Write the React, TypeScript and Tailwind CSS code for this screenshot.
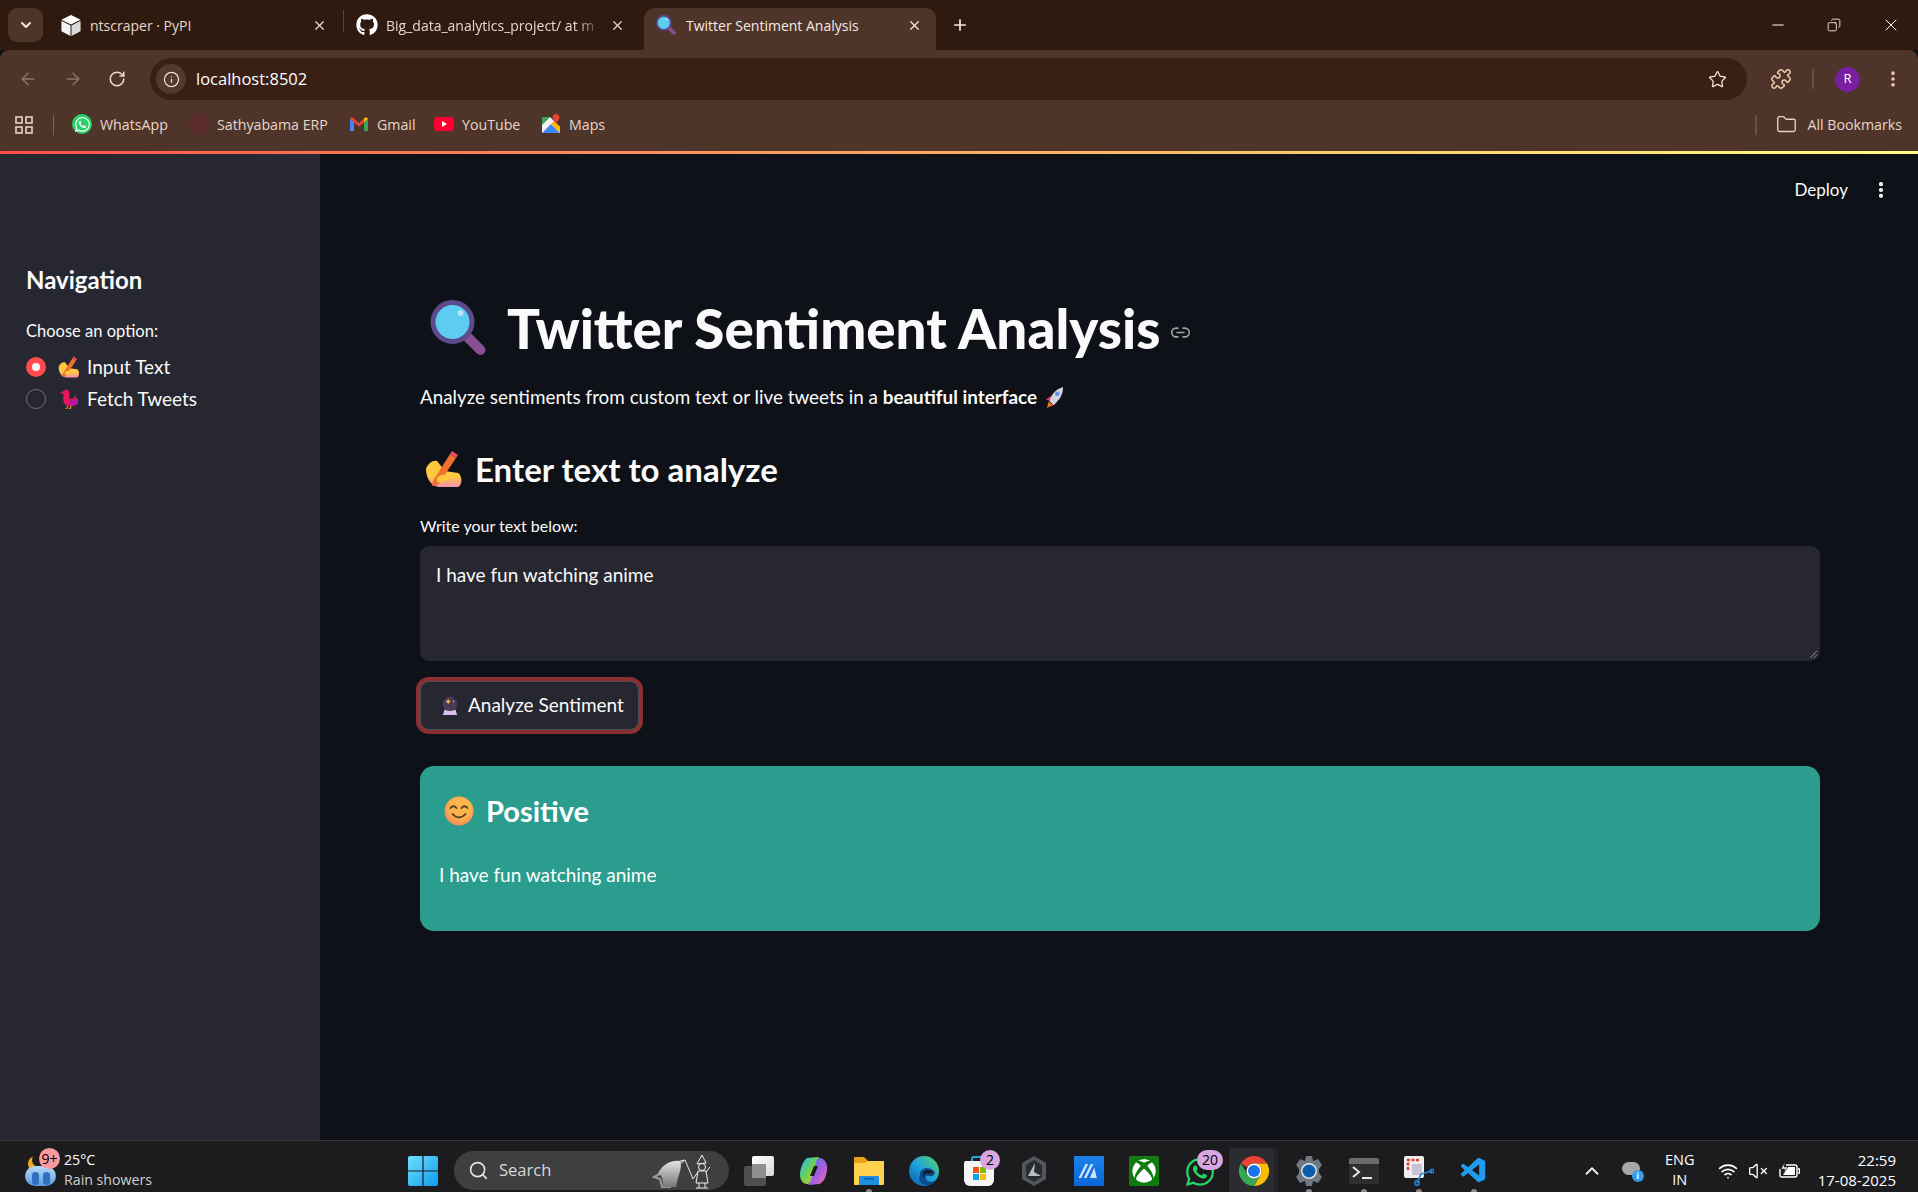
import {
  ArrowLeft,
  ArrowRight,
  ChevronDown,
  ChevronUp,
  Copy,
  EllipsisVertical,
  Folder,
  Info,
  Link2,
  Minus,
  Plus,
  Puzzle,
  RotateCw,
  Search,
  Star,
  VolumeX,
  Wifi,
  X,
} from 'lucide-react';
import { FaGithub, FaWhatsapp, FaXbox } from 'react-icons/fa';
import { VscVscode } from 'react-icons/vsc';

const BODY = "font-['Lato','Noto_Sans',sans-serif]";
const CHROME = "font-['Open_Sans','Noto_Sans',sans-serif]";

function Magnifier({ className }: { className?: string }) {
  return (
    <svg viewBox="0 0 56 56" className={className}>
      <path d="M33 33 L50 50" stroke="#8a4f93" strokeWidth="10" strokeLinecap="round" />
      <circle cx="22" cy="22" r="19.5" fill="#5ccdf0" stroke="#5c4a8c" strokeWidth="5" />
      <circle cx="30" cy="13" r="3" fill="#b9e6f7" />
    </svg>
  );
}

function WritingHand({ className }: { className?: string }) {
  return (
    <svg viewBox="0 0 38 38" className={className}>
      <defs>
        <linearGradient id="handFill" x1="0" y1="0" x2="0" y2="1">
          <stop offset="0.6" stopColor="#ffc83d" />
          <stop offset="1" stopColor="#f790b0" />
        </linearGradient>
      </defs>
      <path d="M1 19 C3 13 8 10 12 11 L20 21 L33 23 C37 25 38 35 33 37 L15 37 C7 37 1 29 1 19 Z" fill="url(#handFill)" />
      <path d="M8 31 L25 4 L31 8 L13 35 L7 36 Z" fill="#f0702f" />
      <path d="M25 4 L27 1 L33 5 L31 8 Z" fill="#ef4a5f" />
      <path d="M12 28 C16 24 21 24 25 27 C22 31 17 33 12 32 Z" fill="#ffc83d" />
    </svg>
  );
}

function Rooster({ className }: { className?: string }) {
  return (
    <svg viewBox="0 0 22 24" className={className}>
      <path d="M0 4 L4 3 C6 0 10 0 11 3 C12 6 11 9 12 12 L17 11 L19 7 L20 12 L22 11 L21 18 C18 21 10 22 6 18 C3 14 5 9 4 6 Z" fill="#e8175d" />
      <path d="M11 14 L21 12 L21 18 C18 20 13 20 10 18 Z" fill="#b5179e" />
      <path d="M9 20 L9 23 L7 23.5 M13 20 L13 23 L11 23.5" fill="none" stroke="#f0902f" strokeWidth="1.4" />
    </svg>
  );
}

function Rocket({ className }: { className?: string }) {
  return (
    <svg viewBox="0 0 22 24" className={className}>
      <path d="M3 23 L5 16 L9 20 Z" fill="#f97316" />
      <path d="M2 14 L8 10 L7 16 Z M8 22 L13 15 L9 16 Z" fill="#e8396b" />
      <path d="M6 16 C7 9 13 3 20 1 C20 9 16 15 10 20 Z" fill="#d5d3de" />
      <circle cx="14" cy="8" r="2.4" fill="#6a8fe8" />
    </svg>
  );
}

function CrystalBall({ className }: { className?: string }) {
  return (
    <svg viewBox="0 0 20 22" className={className}>
      <circle cx="10" cy="8.5" r="8" fill="#4a3a55" />
      <path d="M7 5 L8 3 L9 5 L11 6 L9 7 L8 9 L7 7 L5 6 Z M13 6 L14 5 L15 6 L14 7 Z" fill="#f5b642" />
      <path d="M4 15 C7 17 13 17 16 15 L18 21 L2 21 Z" fill="#d9bfee" />
    </svg>
  );
}

function Smile({ className }: { className?: string }) {
  return (
    <svg viewBox="0 0 30 30" className={className}>
      <defs>
        <radialGradient id="smileFill" cx="0.55" cy="0.4" r="0.7">
          <stop offset="0.5" stopColor="#fdb44b" />
          <stop offset="1" stopColor="#f2795a" />
        </radialGradient>
      </defs>
      <circle cx="15" cy="15" r="14.5" fill="url(#smileFill)" />
      <path d="M6.5 12 Q9.5 8.5 12.5 12 M17.5 12 Q20.5 8.5 23.5 12" fill="none" stroke="#5b3a29" strokeWidth="1.8" strokeLinecap="round" />
      <path d="M8.5 18 Q15 25 21.5 18" fill="none" stroke="#5b3a29" strokeWidth="1.8" strokeLinecap="round" />
    </svg>
  );
}

function PypiBox() {
  return (
    <svg viewBox="0 0 22 24" className="h-[23px] w-[22px]">
      <path d="M11 1 L21 6 L11 11 L1 6 Z" fill="#ffffff" />
      <path d="M1 7 L10.5 12 L10.5 23 L1 18 Z" fill="#f2f2f2" />
      <path d="M21 7 L11.5 12 L11.5 23 L21 18 Z" fill="#d9d9d9" />
    </svg>
  );
}

function AppsGrid() {
  return (
    <svg viewBox="0 0 18 18" className="h-[18px] w-[18px]" fill="none" stroke="#e6d3c7" strokeWidth="1.6">
      <rect x="1" y="1" width="6" height="6" />
      <rect x="11" y="1" width="6" height="6" />
      <rect x="1" y="11" width="6" height="6" />
      <rect x="11" y="11" width="6" height="6" />
    </svg>
  );
}

function GmailIcon() {
  return (
    <svg viewBox="0 0 18 14" className="h-[14px] w-[18px]">
      <path d="M0 2 L0 14 L4 14 L4 5 Z" fill="#4285f4" />
      <path d="M18 2 L18 14 L14 14 L14 5 Z" fill="#34a853" />
      <path d="M0 2 L2 0 L9 6 L16 0 L18 2 L9 9.5 Z" fill="#ea4335" />
      <path d="M14 5 L18 2 L16 0 L14 1.6 Z" fill="#fbbc04" />
    </svg>
  );
}

function YoutubeIcon() {
  return (
    <div className="flex h-[14px] w-5 items-center justify-center rounded-[4px] bg-[#ff0033]">
      <div className="h-0 w-0 border-y-[3px] border-l-[5px] border-y-transparent border-l-white" />
    </div>
  );
}

function MapsIcon() {
  return (
    <svg viewBox="0 0 18 20" className="h-5 w-[18px]">
      <path d="M0 3 L8 3 L0 11 Z" fill="#34a853" />
      <path d="M0 11 L8 3 L18 13 L18 19 L0 19 Z" fill="#f5f5f5" />
      <path d="M0 19 L9 10 L18 19 Z" fill="#4285f4" />
      <path d="M18 13 L18 19 L9 10 L12 7 Z" fill="#fbbc04" />
      <path d="M14 0 C17 0 18 3 17 5 L14 10 L11 5 C10 3 11 0 14 0 Z" fill="#ea4335" />
    </svg>
  );
}

function Tab({ icon, title, active, width, fade, right = 14 }: { icon: React.ReactNode; title: string; active?: boolean; width: number; fade?: boolean; right?: number }) {
  return (
    <div
      style={{ width, paddingRight: right }}
      className={`flex h-[42px] shrink-0 items-center pb-[8px] pl-[12px] ${active ? 'rounded-t-[11px] bg-[#4f3529] text-[#f5e9e1]' : 'text-[#e8d6ca]'}`}
    >
      <div className="flex w-[30px] shrink-0 items-center">{icon}</div>
      <div className={`min-w-0 flex-1 whitespace-nowrap text-[14px] ${fade ? '[mask-image:linear-gradient(90deg,black_88%,transparent)]' : ''}`}>{title}</div>
      <X size={15} strokeWidth={2} className="ml-2 shrink-0" />
    </div>
  );
}

function TabStrip() {
  return (
    <div className={`flex h-[50px] items-end bg-[#2f1a0f] ${CHROME}`}>
      <div className="mb-[8px] ml-[8px] flex h-[34px] w-[35px] items-center justify-center rounded-[9px] bg-[#4f3529]">
        <ChevronDown size={16} strokeWidth={3} className="text-[#f5e9e1]" />
      </div>
      <div className="ml-[5px] flex items-end">
        <Tab width={295} right={16} icon={<PypiBox />} title="ntscraper · PyPI" />
        <div className="mb-[18px] h-[22px] w-px bg-[#5c4436]" />
        <Tab width={300} right={19} icon={<FaGithub size={22} className="text-white" />} title="Big_data_analytics_project/ at m" fade />
        <Tab active width={292} icon={<Magnifier className="h-[20px] w-[20px]" />} title="Twitter Sentiment Analysis" />
      </div>
      <Plus size={18} strokeWidth={2.2} className="mb-[16px] ml-[15px] text-[#f5e9e1]" />
      <div className="flex-1" />
      <div className="mb-[15px] flex items-center gap-[40px] pr-[17px] text-white">
        <Minus size={18} strokeWidth={1.3} />
        <Copy size={14} strokeWidth={1.4} className="-scale-x-100" />
        <X size={20} strokeWidth={1.2} />
      </div>
    </div>
  );
}

function Toolbar() {
  return (
    <div className={`flex h-[50px] items-center rounded-t-[9px] bg-[#4f3529] pt-[8px] ${CHROME}`}>
      <div className="flex w-[150px] items-center gap-[25px] pl-[18px]">
        <ArrowLeft size={20} strokeWidth={1.6} className="text-[#8d7669]" />
        <ArrowRight size={20} strokeWidth={1.6} className="text-[#8d7669]" />
        <RotateCw size={18} strokeWidth={2} className="text-[#efddd2]" />
      </div>
      <div className="flex h-[42px] w-[1597px] items-center rounded-full bg-[#3a2014] pl-[6px] pr-[20px]">
        <div className="flex h-[30px] w-[30px] items-center justify-center rounded-full bg-[#533a2d]">
          <Info size={17} strokeWidth={1.8} className="text-[#efddd2]" />
        </div>
        <div className="ml-[10px] flex-1 text-[16.5px] text-white">localhost:8502</div>
        <Star size={19} strokeWidth={1.7} className="text-[#efddd2]" />
      </div>
      <Puzzle size={22} strokeWidth={1.7} className="ml-[23px] text-[#efc9b0]" />
      <div className="ml-[20px] h-[20px] w-[2px] bg-[#6b5042]" />
      <div className="ml-[21px] flex h-[25px] w-[25px] items-center justify-center rounded-full bg-[#7b1fa2] text-[13px] text-white">R</div>
      <EllipsisVertical size={20} strokeWidth={2.4} className="ml-[23px] text-[#efc9b0]" />
    </div>
  );
}

function Bookmark({ icon, label, w }: { icon: React.ReactNode; label: string; w: string }) {
  return (
    <div className={`flex items-center gap-[8px] ${w}`}>
      <div className="flex w-[20px] shrink-0 justify-center">{icon}</div>
      <span className="whitespace-nowrap text-[14.2px] text-[#e8d6ca]">{label}</span>
    </div>
  );
}

function BookmarksBar() {
  return (
    <div className={`flex h-[51px] items-center bg-[#4f3529] pb-[2px] ${CHROME}`}>
      <div className="ml-[15px]">
        <AppsGrid />
      </div>
      <div className="ml-[20px] h-[20px] w-px bg-[#7a6254]" />
      <div className="ml-[18px] flex items-center">
        <Bookmark w="w-[117px]" icon={<div className="flex h-5 w-5 items-center justify-center rounded-full bg-[#25d366]"><FaWhatsapp size={17} className="text-white" /></div>} label="WhatsApp" />
        <Bookmark w="w-[160px]" icon={<div className="h-5 w-5 rounded-full bg-[#5a2a2d]" />} label="Sathyabama ERP" />
        <Bookmark w="w-[85px]" icon={<GmailIcon />} label="Gmail" />
        <Bookmark w="w-[107px]" icon={<YoutubeIcon />} label="YouTube" />
        <Bookmark w="w-[69px]" icon={<MapsIcon />} label="Maps" />
      </div>
      <div className="flex-1" />
      <div className="h-[20px] w-[2px] bg-[#6b5042]" />
      <Folder size={21} strokeWidth={1.5} className="ml-[19px] text-[#e6d3c7]" />
      <span className="ml-[10px] mr-[16px] whitespace-nowrap text-[14.2px] text-[#e8d6ca]">All Bookmarks</span>
    </div>
  );
}

function Sidebar() {
  return (
    <div className={`w-[320px] shrink-0 bg-[#262730] pl-[26px] pt-[109px] text-[#fafafa] ${BODY}`}>
      <div className="text-[24px] font-bold leading-[34px]">Navigation</div>
      <div className="mt-[23px] text-[16.5px] leading-[22px]">Choose an option:</div>
      <div className="mt-[9px] flex h-[32px] items-center">
        <div className="flex h-5 w-5 items-center justify-center rounded-full bg-[#ff4b4b]">
          <div className="h-2 w-2 rounded-full bg-[#f5f5f5]" />
        </div>
        <WritingHand className="ml-[12px] h-[22px] w-[22px]" />
        <span className="ml-[7px] text-[19px]">Input Text</span>
      </div>
      <div className="flex h-[32px] items-center">
        <div className="h-5 w-5 rounded-full border border-[#70717a]" />
        <Rooster className="ml-[13px] h-[20px] w-[20px]" />
        <span className="ml-[8px] text-[19px]">Fetch Tweets</span>
      </div>
    </div>
  );
}

function MainPane() {
  return (
    <div className={`flex-1 bg-[#0e1117] text-[#fafafa] ${BODY}`}>
      <div className="flex h-[71px] items-center justify-end pr-[27px]">
        <span className="text-[17px]">Deploy</span>
        <EllipsisVertical size={20} strokeWidth={3} className="ml-[23px] text-white" />
      </div>
      <div className="pl-[100px] pr-[98px]">
        <div className="mt-[73px] flex h-[60px] items-center">
          <Magnifier className="ml-[10px] h-[56px] w-[57px]" />
          <h1 className="ml-[20px] whitespace-nowrap text-[54.7px] font-black leading-[60px]">Twitter Sentiment Analysis</h1>
          <Link2 size={21} strokeWidth={1.8} className="ml-[10px] mt-[8px] text-[#a3a3a8]" />
        </div>
        <p className="mt-[27px] flex h-6 items-center whitespace-nowrap text-[18.85px] leading-6">
          <span className="whitespace-pre">Analyze sentiments from custom text or live tweets in a </span>
          <b className="font-bold">beautiful interface</b>
          <Rocket className="ml-[7px] h-[23px] w-[21px]" />
        </p>
        <div className="mt-[40px] flex h-10 items-center">
          <WritingHand className="ml-[5px] h-[38px] w-[38px]" />
          <h2 className="ml-[12px] whitespace-nowrap text-[33px] font-bold leading-10">Enter text to analyze</h2>
        </div>
        <div className="mt-[27px] text-[16px] leading-5">Write your text below:</div>
        <div className="relative mt-[10px] h-[115px] rounded-[9px] bg-[#262730] px-4 py-[17px] text-[19px] leading-6">
          I have fun watching anime
          <svg viewBox="0 0 10 10" className="absolute bottom-[2px] right-[2px] h-[9px] w-[9px]" stroke="#9a9aa0" strokeWidth="1">
            <path d="M1 9 L9 1 M5 9 L9 5" />
          </svg>
        </div>
        <div className="mt-[20px] flex h-[49px] w-[219px] items-center rounded-[9px] border border-[#4c4d57] bg-[#262730] pl-[20px] ring-4 ring-[#8b2f33]">
          <CrystalBall className="h-[20px] w-[18px]" />
          <span className="ml-[9px] whitespace-nowrap text-[19px]">Analyze Sentiment</span>
        </div>
        <div className="mt-[36px] h-[165px] rounded-[14px] bg-[#2a9d8f] pl-[19px] pt-[27px] text-white">
          <div className="flex h-9 items-center">
            <Smile className="ml-[5px] h-[30px] w-[30px]" />
            <span className="ml-[12px] text-[29px] font-bold leading-9">Positive</span>
          </div>
          <p className="mt-[34px] text-[19px] leading-6">I have fun watching anime</p>
        </div>
      </div>
    </div>
  );
}

function WindowsLogo() {
  return (
    <svg viewBox="0 0 30 30" className="h-[30px] w-[30px]">
      <defs>
        <linearGradient id="winFill" x1="0" y1="0" x2="1" y2="1">
          <stop offset="0" stopColor="#6fe0fb" />
          <stop offset="1" stopColor="#0f9bf0" />
        </linearGradient>
      </defs>
      <path d="M0 2 Q0 0 2 0 L14.4 0 L14.4 14.4 L0 14.4 Z M15.6 0 L28 0 Q30 0 30 2 L30 14.4 L15.6 14.4 Z M0 15.6 L14.4 15.6 L14.4 30 L2 30 Q0 30 0 28 Z M15.6 15.6 L30 15.6 L30 28 Q30 30 28 30 L15.6 30 Z" fill="url(#winFill)" />
    </svg>
  );
}

function ChromeLogo() {
  return (
    <svg viewBox="0 0 30 30" className="h-[30px] w-[30px]">
      <path d="M15 0 A15 15 0 0 1 28 7.5 L15 7.5 A7.5 7.5 0 0 0 8.5 11.2 L2 7.5 A15 15 0 0 1 15 0 Z" fill="#ea4335" />
      <path d="M28 7.5 A15 15 0 0 1 15 30 L21.5 18.8 A7.5 7.5 0 0 0 21.5 11.2 L15 7.5 Z" fill="#fbbc04" />
      <path d="M15 30 A15 15 0 0 1 2 7.5 L8.5 18.8 A7.5 7.5 0 0 0 21.5 18.8 Z" fill="#34a853" />
      <circle cx="15" cy="15" r="7.5" fill="#fff" />
      <circle cx="15" cy="15" r="6" fill="#1a73e8" />
    </svg>
  );
}

function Badge({ text, className }: { text: string; className: string }) {
  return (
    <div className={`absolute flex h-[20px] items-center justify-center rounded-full bg-[#d8a6e0] text-[14px] text-black ${className}`}>{text}</div>
  );
}

function RunDot() {
  return <div className="absolute -bottom-[7px] left-[12px] h-[4px] w-[6px] rounded-t-full bg-[#8a8a8a]" />;
}

// pinned apps, each in a 30px slot with a 25px gap
function PinnedApps() {
  return (
    <div className="flex items-center gap-[25px]">
      {/* task view */}
      <div className="relative h-[30px] w-[30px]">
        <div className="absolute bottom-0 left-0 h-[20px] w-[22px] rounded-[2px] bg-[#4f4f4f]" />
        <div className="absolute right-0 top-0 h-[20px] w-[22px] rounded-[2px] bg-gradient-to-br from-[#ffffff] to-[#d8d8d8]" />
        <div className="absolute left-[8px] top-[8px] h-[14px] w-[14px] bg-[#8f8f8f]" />
      </div>
      {/* copilot */}
      <svg viewBox="0 0 30 30" className="h-[30px] w-[30px]">
        <defs>
          <linearGradient id="copilotLeft" x1="0" y1="0" x2="1" y2="1">
            <stop offset="0" stopColor="#1fb6ff" />
            <stop offset="0.5" stopColor="#6bd34f" />
            <stop offset="1" stopColor="#ffc02e" />
          </linearGradient>
          <linearGradient id="copilotRight" x1="0" y1="0" x2="1" y2="1">
            <stop offset="0" stopColor="#3a7cf0" />
            <stop offset="0.6" stopColor="#b05be0" />
            <stop offset="1" stopColor="#f27a8a" />
          </linearGradient>
        </defs>
        <path d="M8 2 L19 1 C21 1 19 3 18 6 L13 24 C12 27 11 28 8 28 C4 28 1 24 1 19 C1 13 4 5 8 2 Z" fill="url(#copilotLeft)" />
        <path d="M21 2 C25 2 29 7 28 14 C27 22 24 27 20 28 L10 29 C8 29 11 27 12 24 L17 6 C18 3 19 2 21 2 Z" fill="url(#copilotRight)" />
        <path d="M15 10 L19 10 L15 20 L11 20 Z" fill="#1c1c1f" />
      </svg>
      {/* file explorer */}
      <div className="relative h-[30px] w-[30px]">
        <svg viewBox="0 0 30 30" className="h-[30px] w-[30px]">
          <path d="M0 2 Q0 1 1 1 L10 1 L14 5 L30 5 L30 12 L0 12 Z" fill="#e8a317" />
          <path d="M0 7 L11 7 L14 5 L30 5 L30 28 Q30 29 29 29 L1 29 Q0 29 0 28 Z" fill="#ffd24d" />
          <path d="M5 29 L5 21 Q5 20 6 20 L24 20 Q25 20 25 21 L25 29 Z" fill="#1d8fe0" />
          <rect x="10" y="22" width="10" height="1.5" fill="#0b5cab" />
        </svg>
        <RunDot />
      </div>
      {/* edge */}
      <svg viewBox="0 0 30 30" className="h-[30px] w-[30px]">
        <defs>
          <linearGradient id="edgeFill" x1="1" y1="0" x2="0" y2="1">
            <stop offset="0" stopColor="#5ed45a" />
            <stop offset="0.5" stopColor="#1ea4e0" />
            <stop offset="1" stopColor="#0c59a4" />
          </linearGradient>
        </defs>
        <circle cx="15" cy="15" r="15" fill="url(#edgeFill)" />
        <path d="M11 18 C11 12 19 10 24 14 C28 17 25 21 20 20 C17 19 16 20 17 23 C18 26 23 27 27 24 C23 30 15 31 11 26 C10 24 10 21 11 18 Z" fill="#0a4d8c" />
        <path d="M14 18 C14 14 20 13 23 15 C25 17 22 18 19 17.5 C16 17 14 19 15 22 C13 22 14 20 14 18 Z" fill="#1c1c1f" />
      </svg>
      {/* store */}
      <div className="relative h-[30px] w-[30px]">
        <div className="absolute left-[7px] top-0 h-[8px] w-[16px] rounded-t-[3px] border-x-2 border-t-2 border-[#29a5e8]" />
        <div className="absolute bottom-0 left-0 grid h-[25px] w-[30px] place-items-center rounded-b-[6px] rounded-t-[2px] bg-[#f5f5f5]">
          <div className="grid grid-cols-2 gap-px">
            <div className="h-[6px] w-[6px] bg-[#f25022]" />
            <div className="h-[6px] w-[6px] bg-[#7fba00]" />
            <div className="h-[6px] w-[6px] bg-[#00a4ef]" />
            <div className="h-[6px] w-[6px] bg-[#ffb900]" />
          </div>
        </div>
        <Badge text="2" className="-top-[6px] left-[16px] w-[20px]" />
      </div>
      {/* dark hexagon app */}
      <svg viewBox="0 0 30 30" className="h-[30px] w-[30px]">
        <path d="M15 0 L27 7 L27 23 L15 30 L3 23 L3 7 Z" fill="#53575c" />
        <path d="M15 4 L23 9 L23 21 L15 26 L7 21 L7 9 Z" fill="#2a2c30" />
        <path d="M16 7 L9 20 L22 20 L15 16 Z" fill="#b9bdc2" />
      </svg>
      {/* blue tile */}
      <div className="flex h-[30px] w-[30px] items-center justify-center bg-gradient-to-b from-[#1b82ea] to-[#0b66d8]">
        <svg viewBox="0 0 24 16" className="h-[14px] w-[22px]" fill="#cfe3fb">
          <path d="M0 16 L8 0 L11 0 L3 16 Z M6 16 L14 0 L17 0 L9 16 Z M18 4 L21 16 L13 16 Z" />
        </svg>
      </div>
      {/* xbox */}
      <div className="flex h-[30px] w-[30px] items-center justify-center rounded-[2px] bg-[#107c10]">
        <FaXbox size={24} className="text-white" />
      </div>
      {/* whatsapp */}
      <div className="relative h-[30px] w-[30px]">
        <FaWhatsapp size={32} className="text-[#25d366]" />
        <Badge text="20" className="-top-[6px] left-[13px] w-[26px]" />
      </div>
      {/* chrome, active */}
      <div className="relative -my-[8px] flex h-[46px] w-[30px] items-center justify-center">
        <div className="absolute -left-[10px] -right-[9px] top-0 h-[46px] rounded-[4px] bg-[#232326]" />
        <div className="absolute -left-[10px] -right-[5px] top-0 h-[46px] rounded-[4px] bg-[#2c2c30]" />
        <div className="relative">
          <ChromeLogo />
        </div>
        <div className="absolute -bottom-[3px] left-[5px] h-[3px] w-[20px] rounded-t-full bg-[#d8a6e0]" />
      </div>
      {/* settings */}
      <div className="relative h-[30px] w-[30px]">
        <svg viewBox="0 0 30 30" className="h-[30px] w-[30px]">
          <path d="M12 0 L18 0 L19 5 L24 3 L28 9 L25 13 L25 17 L28 21 L24 27 L19 25 L18 30 L12 30 L11 25 L6 27 L2 21 L5 17 L5 13 L2 9 L6 3 L11 5 Z" fill="#6f7780" />
          <circle cx="15" cy="15" r="8" fill="#dce2e8" />
          <circle cx="15" cy="15" r="6.5" fill="#0b5cab" />
        </svg>
        <RunDot />
      </div>
      {/* terminal */}
      <div className="relative h-[30px] w-[30px]">
        <div className="h-[26px] translate-y-[2px] rounded-[2px] bg-[#2e2e2e]">
          <div className="h-[6px] rounded-t-[2px] bg-[#6b6b6b]" />
          <svg viewBox="0 0 30 20" className="h-[20px] w-[30px]" fill="none" stroke="#e8e8e8" strokeWidth="2">
            <path d="M4 3 L10 8 L4 13" />
            <path d="M13 14 L23 14" />
          </svg>
        </div>
        <RunDot />
      </div>
      {/* snipping tool */}
      <div className="relative h-[30px] w-[30px]">
        <svg viewBox="0 0 30 30" className="h-[30px] w-[30px]">
          <rect x="0" y="0" width="20" height="22" rx="2" fill="#f0eeee" />
          <rect x="8" y="8" width="10" height="11" fill="#c9c3d8" />
          <path d="M4 14 L4 4 L15 4" fill="none" stroke="#d8442c" strokeWidth="2.5" strokeDasharray="3 1.5" />
          <path d="M17 18 L13 27 M17 18 L28 15" stroke="#1e88d8" strokeWidth="1.8" />
          <circle cx="13" cy="27" r="2.2" fill="none" stroke="#1e88d8" strokeWidth="1.5" />
          <circle cx="28" cy="15" r="1.8" fill="none" stroke="#1e88d8" strokeWidth="1.5" />
        </svg>
        <RunDot />
      </div>
      {/* vs code */}
      <div className="relative h-[30px] w-[30px]">
        <VscVscode size={30} className="text-[#1f9cf0]" />
        <RunDot />
      </div>
    </div>
  );
}

function Taskbar() {
  return (
    <div className={`flex h-[52px] shrink-0 items-center border-t border-[#3a3a3a] bg-[#1c1c1f] pt-[8px] text-white ${CHROME}`}>
      <div className="relative ml-[25px] h-[38px] w-[32px] -translate-y-[2px]">
        <div className="absolute left-[3px] top-[6px] h-[16px] w-[16px] rounded-full bg-[#f2a81d]" />
        <div className="absolute left-[7px] top-[3px] h-[14px] w-[14px] rounded-full bg-[#1c1c1f]" />
        <div className="absolute bottom-[2px] left-0 h-[20px] w-[31px] rounded-full bg-gradient-to-b from-[#b8d8f5] to-[#5a9be0]" />
        <div className="absolute bottom-[3px] left-[7px] h-[13px] w-[7px] rounded-full bg-[#2f6fc0]" />
        <div className="absolute bottom-[3px] left-[18px] h-[13px] w-[7px] rounded-full bg-[#2f6fc0]" />
        <div className="absolute -top-[2px] left-[14px] flex h-[21px] w-[21px] items-center justify-center rounded-full bg-[#f99aa0] text-[14px] text-black">9+</div>
      </div>
      <div className="ml-[7px] w-[100px] -translate-y-[1px] whitespace-nowrap text-[14.2px] leading-[20px]">
        <div>25°C</div>
        <div className="text-[#cfcfcf]">Rain showers</div>
      </div>
      <div className="ml-[244px]">
        <WindowsLogo />
      </div>
      <div className="ml-[16px] flex h-[39px] w-[275px] items-center rounded-full bg-[#3f3f3f] pl-[14px]">
        <Search size={21} strokeWidth={1.8} className="text-[#e6e6e6]" />
        <span className="ml-[10px] text-[16.5px] text-[#d8d8d8]">Search</span>
        <svg viewBox="0 0 60 36" className="ml-[101px] h-[36px] w-[60px]">
          <defs>
            <linearGradient id="drawHand" x1="0" y1="0" x2="0" y2="1">
              <stop offset="0" stopColor="#e4e4e4" />
              <stop offset="1" stopColor="#777777" />
            </linearGradient>
          </defs>
          <path d="M2 24 L24 12 L32 8 L22 14 L20 24 L18 34 L10 34 L8 26 Z" fill="none" stroke="#9a9a9a" strokeWidth="2" />
          <path d="M6 20 C12 10 20 7 28 8 C31 14 26 22 24 34 L11 34 C10 28 12 24 6 20 Z" fill="url(#drawHand)" />
          <path d="M28 8 L33 7 L41 26" fill="none" stroke="#e8e8e8" strokeWidth="1" />
          <path d="M50 2 L54 10 L45 11 Z" fill="none" stroke="#f0f0f0" strokeWidth="1" />
          <circle cx="50" cy="14" r="3.5" fill="none" stroke="#f0f0f0" strokeWidth="1" />
          <path d="M46 18 L54 18 L56 30 L44 30 Z M47 30 L47 35 M53 30 L53 35 M44 35 L50 35 M50 35 L56 35 M46 19 L41 26 M54 19 L58 14" fill="none" stroke="#f0f0f0" strokeWidth="1" />
        </svg>
      </div>
      <div className="ml-[15px]">
        <PinnedApps />
      </div>
      <div className="flex-1" />
      <ChevronUp size={22} strokeWidth={2} className="text-[#f0f0f0]" />
      <div className="relative ml-[19px] h-[18px] w-[20px]">
        <div className="absolute left-0 top-0 h-[13px] w-[18px] rounded-full bg-[#a6a6a6]" />
        <div className="absolute -bottom-[2px] right-[-2px] flex h-[12px] w-[12px] items-center justify-center rounded-full bg-[#2f9fe8] text-[9px] font-bold leading-none">i</div>
      </div>
      <div className="ml-[19px] w-[38px] -translate-y-[1px] text-center text-[14.5px] leading-[20px]">
        <div>ENG</div>
        <div>IN</div>
      </div>
      <Wifi size={20} strokeWidth={2} className="ml-[19px]" />
      <VolumeX size={20} strokeWidth={1.6} className="ml-[10px]" />
      <svg viewBox="0 0 22 18" className="ml-[10px] h-[18px] w-[22px]" fill="none" stroke="#ffffff" strokeWidth="1.4">
        <path d="M8 3 L17 3 Q19 3 19 5 L19 13 Q19 15 17 15 L4 15 Q2 15 2 13 L2 7" />
        <path d="M20 7 L21.5 7 L21.5 11 L20 11" />
        <path d="M10 5 L17 5 L17 13 L5 13 Z" fill="#ffffff" stroke="none" />
        <path d="M7 0 L3 7 L7 7 L5 12 L10 5 L6 5 Z" fill="#ffffff" stroke="#1c1c1f" strokeWidth="0.6" />
      </svg>
      <div className="ml-[18px] mr-[22px] -translate-y-[1px] text-right text-[15px] leading-[20px]">
        <div>22:59</div>
        <div>17-08-2025</div>
      </div>
    </div>
  );
}

export default function App() {
  return (
    <div className="flex h-[1192px] flex-col overflow-hidden bg-[#0e1117]">
      <TabStrip />
      <Toolbar />
      <BookmarksBar />
      <div className="h-[3px] bg-gradient-to-r from-[#ff4b4b] to-[#fffd80]" />
      <div className="flex min-h-0 flex-1">
        <Sidebar />
        <MainPane />
      </div>
      <Taskbar />
    </div>
  );
}
